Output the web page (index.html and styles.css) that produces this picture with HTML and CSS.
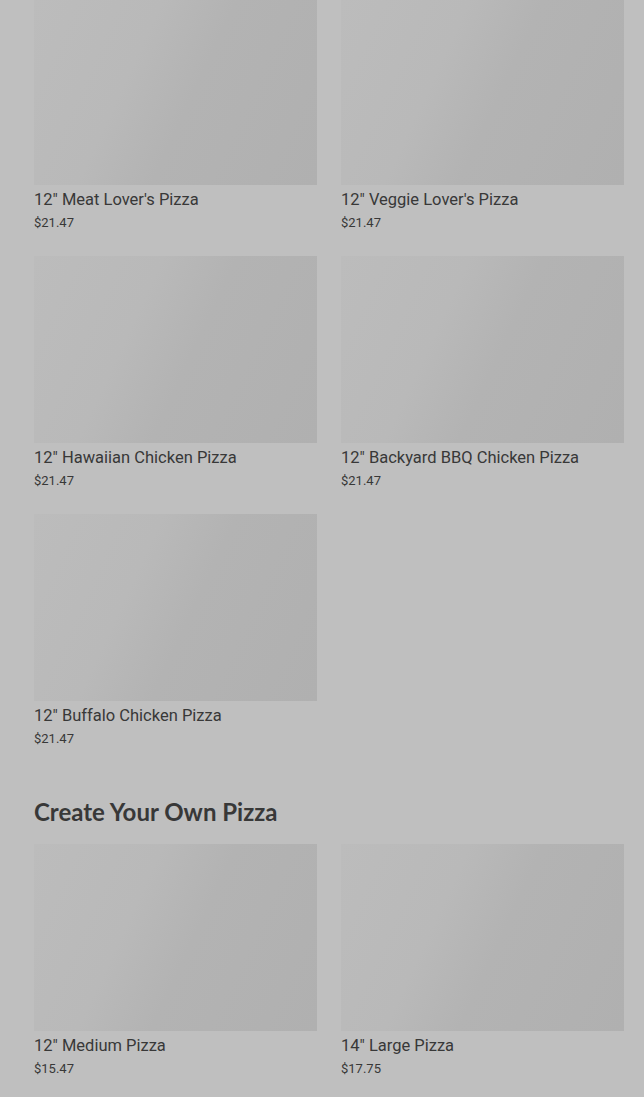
FILE: index.html
```html
<!DOCTYPE html>
<html lang="en">
  <head>
    <meta charset="UTF-8" />
    <title>Menu</title>
    <link rel="stylesheet" href="styles.css">
  </head>
  <body>
    <main class="menu">
      <section class="group">
        <div class="grid">
          <div class="card">
            <div class="thumb"></div>
            <div class="name">12" Meat Lover's Pizza</div>
            <div class="price">$21.47</div>
          </div>
          <div class="card">
            <div class="thumb"></div>
            <div class="name">12" Veggie Lover's Pizza</div>
            <div class="price">$21.47</div>
          </div>
          <div class="card">
            <div class="thumb"></div>
            <div class="name">12" Hawaiian Chicken Pizza</div>
            <div class="price">$21.47</div>
          </div>
          <div class="card">
            <div class="thumb"></div>
            <div class="name">12" Backyard BBQ Chicken Pizza</div>
            <div class="price">$21.47</div>
          </div>
          <div class="card">
            <div class="thumb"></div>
            <div class="name">12" Buffalo Chicken Pizza</div>
            <div class="price">$21.47</div>
          </div>
        </div>
      </section>
      <section class="group">
        <h2 class="group-title">Create Your Own Pizza</h2>
        <div class="grid">
          <div class="card">
            <div class="thumb"></div>
            <div class="name">12" Medium Pizza</div>
            <div class="price">$15.47</div>
          </div>
          <div class="card">
            <div class="thumb"></div>
            <div class="name">14" Large Pizza</div>
            <div class="price">$17.75</div>
          </div>
        </div>
      </section>
    </main>
  </body>
</html>
```

FILE: styles.css
```css
body {
  margin: 0;
  background-color: #bfbfbf;
  color: #383838;
  font-family: "Roboto", "Liberation Sans", sans-serif;
  overflow: hidden;
}
.menu {
  margin-top: -2px;
  padding: 0 20px 0 34px;
}
.grid {
  display: grid;
  grid-template-columns: 1fr 1fr;
  column-gap: 24px;
  row-gap: 24px;
}
.thumb {
  height: 187px;
  background: linear-gradient(115deg, #bcbcbc 0%, #b9b9b9 35%, #b3b3b3 55%, #b0b0b0 100%);
}
.name {
  margin-top: 5px;
  font-size: 16.5px;
  line-height: 20px;
  font-weight: 400;
}
.price {
  margin-top: 4px;
  font-size: 13px;
  line-height: 18px;
}
.group-title {
  margin: 49px 0 17px;
  font-family: "Lato", sans-serif;
  font-size: 24px;
  line-height: 30px;
  font-weight: 700;
}
```
